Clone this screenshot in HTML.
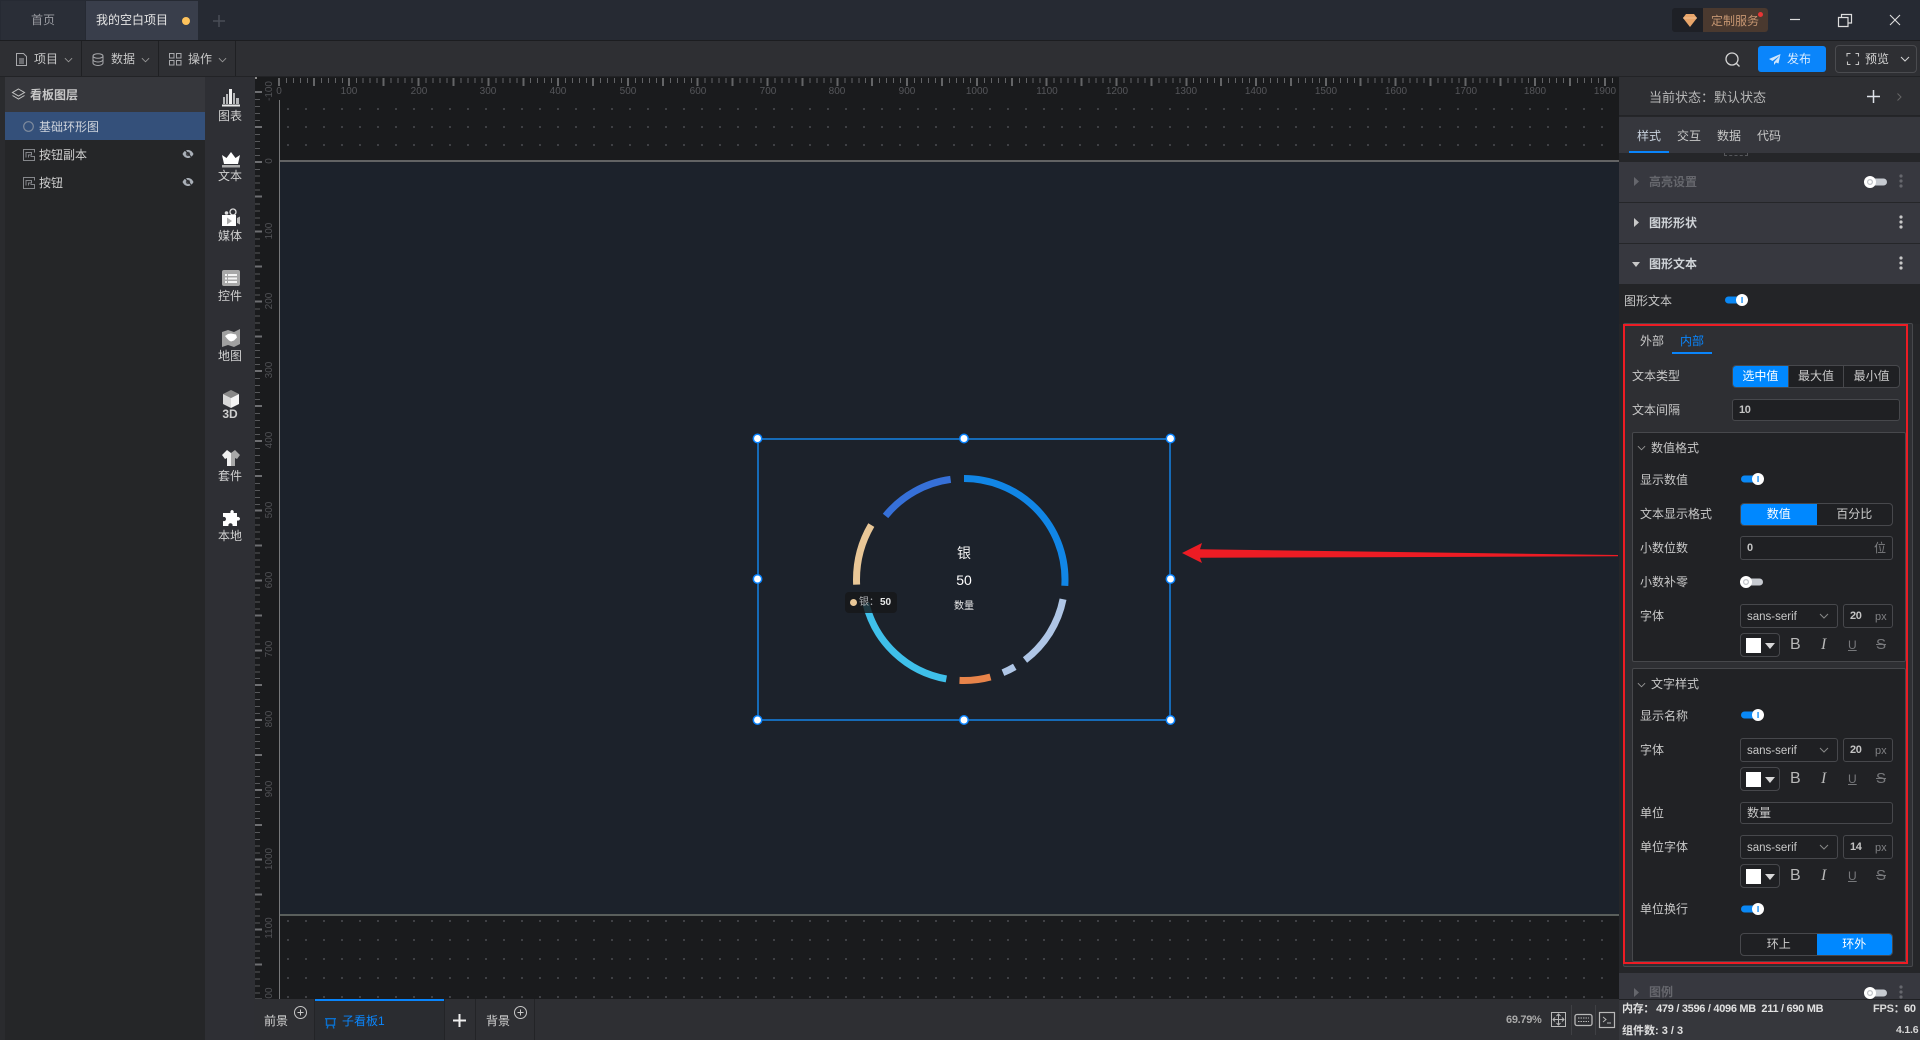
<!DOCTYPE html>
<html lang="zh"><head><meta charset="utf-8"><title>看板</title>
<style>
*{box-sizing:border-box}
html,body{margin:0;padding:0;width:1920px;height:1040px;overflow:hidden;background:#252629}
body{position:relative;font:12px/16px "Liberation Sans","Noto Sans CJK SC",sans-serif;color:#c8c8c8}
.b{position:absolute}
.t{position:absolute;white-space:nowrap;line-height:16px;margin-top:-8px}
.c{transform:translateX(-50%);text-align:center}
.s{font-weight:700}
.n{font-weight:700;font-size:11px;letter-spacing:-.4px;color:#c4c4c4}
.i{font:italic 16px/16px "Liberation Serif",serif;color:#b8b8b8}
.box{position:absolute;border:1px solid #47484c;border-radius:3px;background:#1f2023}
.seg{position:absolute;display:flex;border:1px solid #47484c;border-radius:4px;overflow:hidden;background:#1f2023}
.seg div{flex:1;text-align:center;line-height:21px;color:#ccc;border-left:1px solid #47484c}
.seg div:first-child{border-left:0}
.seg div.on{background:#0088ff;color:#fff;border-left:0}
.rl{position:absolute;font-size:10px;line-height:12px;color:#55565a;width:40px;text-align:center;white-space:nowrap;margin-left:-20px}
.rv{position:absolute;font-size:10px;line-height:12px;color:#505155;width:40px;text-align:center;left:250px;margin-top:-6px;transform:rotate(-90deg);white-space:nowrap}
svg{position:absolute;overflow:visible}
</style></head><body>
<svg width="0" height="0" style="position:absolute">
<defs>
<symbol id="tgon" viewBox="0 0 23 12"><rect x="0" y="2.500" width="20" height="7" rx="3.500" fill="#0a88f5"/><circle cx="17" cy="6" r="6" fill="#fff"/><rect x="16.400" y="3" width="1.300" height="6" fill="#0a88f5"/></symbol>
<symbol id="tgoff" viewBox="0 0 23 12"><rect x="3" y="2.500" width="20" height="7" rx="3.500" fill="#c6cad0"/><circle cx="6" cy="6" r="6" fill="#fff"/><circle cx="6" cy="6" r="2.400" fill="none" stroke="#bfc3c8" stroke-width="1.200"/></symbol>
<symbol id="keb" viewBox="0 0 4 14"><circle cx="2" cy="2" r="1.600"/><circle cx="2" cy="7" r="1.600"/><circle cx="2" cy="12" r="1.600"/></symbol>
<symbol id="eye" viewBox="0 0 12 12"><path d="M.5 6C2 3 4 2 6 2s4 1 5.500 4C10 9 8 10 6 10S2 9 .5 6z" fill="#aab0b8"/><circle cx="6" cy="6" r="2.200" fill="#45464b"/><path d="M2 1l9 10" stroke="#26272a" stroke-width="1"/></symbol>
<symbol id="btn" viewBox="0 0 12 12"><path d="M11.500 3.500V.5H.5v11H11.500V7.500H7.500M3 8.500V3.500H8.500V6H5.500V8.500" fill="none" stroke="#85878b" stroke-width="1"/></symbol>
<symbol id="chev" viewBox="0 0 10 6"><path d="M1 1l4 4 4-4" fill="none" stroke="currentColor" stroke-width="1"/></symbol>
</defs></svg>

<!-- top tab bar -->
<div class="b" style="left:0;top:0;width:1920px;height:41px;background:#262a33;border-bottom:1px solid #1c1d20"></div>
<div class="b" style="left:1px;top:1px;width:84px;height:39px;background:#2a2e37"></div>
<div class="b" style="left:86px;top:1px;width:112px;height:39px;background:#393e4b"></div>
<div class="t" style="left:31px;top:20px;color:#9a9ca2">首页</div>
<div class="t" style="left:96px;top:20px;color:#e6e6e6">我的空白项目</div>
<div class="b" style="left:182px;top:17px;width:8px;height:8px;border-radius:50%;background:#ffc35c"></div>
<svg style="left:213px;top:15px" width="12" height="12"><path d="M6 0v12M0 6h12" stroke="#484c56" stroke-width="1.500"/></svg>
<!-- service -->
<div class="b" style="left:1672px;top:8px;width:96px;height:24px;background:#1e2026;border-radius:3px"></div>
<div class="b" style="left:1703px;top:8px;width:65px;height:24px;background:#4a392f;border-radius:0 3px 3px 0"></div>
<svg style="left:1683px;top:14px" width="14" height="13"><path d="M3 0h8l3 4-7 9-7-9z" fill="#e8a56a"/><path d="M0 4h14" stroke="#f4c79b" stroke-width=".8"/></svg>
<div class="t" style="left:1711px;top:21px;color:#c69672">定制服务</div>
<div class="b" style="left:1758px;top:12px;width:5px;height:5px;border-radius:50%;background:#e83535"></div>
<svg style="left:1790px;top:10px" width="120" height="20"><path d="M0 9.500h10" stroke="#ddd" stroke-width="1.200"/><path d="M48.500 7.500h9.500v9h-9.500zM51.500 7V4.500h10v8.500h-3.500" fill="none" stroke="#ddd" stroke-width="1.200"/><path d="M100 5l10 10M110 5l-10 10" stroke="#ddd" stroke-width="1.100"/></svg>

<!-- toolbar -->
<div class="b" style="left:0;top:41px;width:1920px;height:36px;background:#2e2f33;border-bottom:1px solid #222326"></div>
<div class="b" style="left:81px;top:41px;width:1px;height:35px;background:#1f2023"></div>
<div class="b" style="left:158px;top:41px;width:1px;height:35px;background:#1f2023"></div>
<div class="b" style="left:235px;top:41px;width:1px;height:35px;background:#1f2023"></div>
<svg style="left:15px;top:53px" width="13" height="13" fill="none" stroke="#a8a9ac" stroke-width="1"><path d="M1.500.5h7l3 3v9h-10zM4 6h5M4 8h5M4 10h5"/></svg>
<div class="t" style="left:34px;top:59px">项目</div>
<svg style="left:64px;top:57px;color:#999" width="9" height="6"><use href="#chev"/></svg>
<svg style="left:92px;top:53px" width="12" height="13" fill="none" stroke="#a8a9ac" stroke-width="1"><ellipse cx="6" cy="3" rx="5" ry="2.300"/><path d="M1 3v7c0 1.500 2.500 2.500 5 2.500s5-1 5-2.500V3M1 6.500c0 1.500 2.500 2.500 5 2.500s5-1 5-2.500"/></svg>
<div class="t" style="left:111px;top:59px">数据</div>
<svg style="left:141px;top:57px;color:#999" width="9" height="6"><use href="#chev"/></svg>
<svg style="left:169px;top:53px" width="13" height="13" fill="none" stroke="#a8a9ac" stroke-width="1"><rect x=".5" y=".5" width="4.500" height="4.500"/><rect x="7.500" y=".5" width="4.500" height="4.500"/><rect x=".5" y="7.500" width="4.500" height="4.500"/><rect x="7.500" y="7.500" width="4.500" height="4.500"/></svg>
<div class="t" style="left:188px;top:59px">操作</div>
<svg style="left:218px;top:57px;color:#999" width="9" height="6"><use href="#chev"/></svg>
<svg style="left:1725px;top:52px" width="16" height="16" fill="none" stroke="#d4d4d4" stroke-width="1.300"><circle cx="7" cy="7" r="6"/><path d="M11.500 11.500l3 3"/></svg>
<div class="b" style="left:1758px;top:46px;width:68px;height:26px;background:#0a85fb;border-radius:3px"></div>
<svg style="left:1769px;top:54px" width="12" height="11"><path d="M11.500 0L0 5l3.500 2L11 1.500 5 8v3l2-2.500 2.500 1z" fill="#cfe5fb"/></svg>
<div class="t" style="left:1787px;top:59px;color:#d8ebff">发布</div>
<div class="b" style="left:1835px;top:45px;width:82px;height:28px;border:1px solid #4a4b4f;border-radius:4px"></div>
<svg style="left:1847px;top:53px" width="12" height="12" fill="none" stroke="#c4c4c4" stroke-width="1.100"><path d="M0 3.500V.5h3.500M8.500.5H11.500V3.500M11.500 8.500V11.500H8.500M3.500 11.500H.5V8.500"/></svg>
<div class="t" style="left:1865px;top:59px;color:#d4d4d4">预览</div>
<svg style="left:1900px;top:56px;color:#d4d4d4" width="10" height="6"><use href="#chev"/></svg>

<!-- left strip & layers -->
<div class="b" style="left:0;top:77px;width:5px;height:963px;background:#2a2b2e"></div>
<div class="b" style="left:5px;top:77px;width:200px;height:963px;background:#252628"></div>
<div class="b" style="left:5px;top:77px;width:200px;height:35px;background:#36373c"></div>
<svg style="left:12px;top:88px" width="13" height="13" fill="none" stroke="#c4c4c4" stroke-width="1"><path d="M6.500 1L12.500 4.500 6.500 8 .5 4.500zM.5 7.500l6 3.500 6-3.500"/></svg>
<div class="t s" style="left:30px;top:95px;color:#c8c8c8">看板图层</div>
<div class="b" style="left:5px;top:112px;width:200px;height:28px;background:#34507a"></div>
<svg style="left:23px;top:121px" width="11" height="11" fill="none" stroke="#7f8b9d" stroke-width="1.200"><circle cx="5.500" cy="5.500" r="4.800"/></svg>
<div class="t" style="left:39px;top:127px;color:#cfd4dc">基础环形图</div>
<svg style="left:23px;top:149px" width="12" height="12"><use href="#btn"/></svg>
<div class="t" style="left:39px;top:155px;color:#d0d0d0">按钮副本</div>
<svg style="left:182px;top:148px" width="12" height="12"><use href="#eye"/></svg>
<svg style="left:23px;top:177px" width="12" height="12"><use href="#btn"/></svg>
<div class="t" style="left:39px;top:183px;color:#d0d0d0">按钮</div>
<svg style="left:182px;top:176px" width="12" height="12"><use href="#eye"/></svg>

<!-- icon bar -->
<div class="b" style="left:205px;top:77px;width:50px;height:922px;background:#2e2f34"></div>
<div class="b" style="left:205px;top:999px;width:50px;height:41px;background:#2e2f34"></div>
<svg style="left:222px;top:89px" width="18" height="18"><path d="M1 15V8h2v7zM4 15V5h2v10zM7 15V0h3v15zM11 15V4h2v11zM14 15V9h3v6z" fill="#b5b6b8"/><path d="M7 15V0h3v15z" fill="#eee"/><rect x="0" y="15.500" width="18" height="2" fill="#e8e8e8"/></svg>
<div class="t c" style="left:230px;top:116px;color:#d0d0d0">图表</div>
<svg style="left:222px;top:152px" width="18" height="16"><path d="M0 3l4.500 3L9 0l4.500 6L18 3l-2 9H2z" fill="#fff"/><rect x="0" y="13" width="18" height="2.500" fill="#aaa"/></svg>
<div class="t c" style="left:230px;top:176px;color:#d0d0d0">文本</div>
<svg style="left:222px;top:209px" width="18" height="18"><circle cx="11" cy="3" r="3" fill="none" stroke="#ddd" stroke-width="1.300"/><circle cx="4.500" cy="4" r="1.800" fill="#ddd"/><path d="M0 6h14v11H0z" fill="#fff"/><path d="M15 9l3-1.500v8L15 14z" fill="#bbb"/><path d="M5 8.500l5 3.500-5 3.500z" fill="#aaa"/></svg>
<div class="t c" style="left:230px;top:236px;color:#d0d0d0">媒体</div>
<svg style="left:222px;top:270px" width="18" height="16"><rect width="18" height="16" rx="2" fill="#a8a8a8"/><path d="M3 4h2v2H3zM6 4h9v2H6zM3 7.500h2v2H3zM6 7.500h9v2H6zM3 11h2v2H3zM6 11h9v2H6z" fill="#f4f4f4"/></svg>
<div class="t c" style="left:230px;top:296px;color:#d0d0d0">控件</div>
<svg style="left:222px;top:329px" width="18" height="18"><path d="M0 3l6-2 6 2 6-3v15l-6 3-6-2-6 2z" fill="#a0a0a0"/><path d="M3 7l3-2 3-.5 5 1 1 3-3 3-3 1-2-1-2-2z" fill="#fff"/></svg>
<div class="t c" style="left:230px;top:356px;color:#d0d0d0">地图</div>
<svg style="left:223px;top:390px" width="16" height="18"><path d="M8 0l8 4-8 4-8-4z" fill="#888"/><path d="M0 4l8 4v10l-8-4z" fill="#d8d8d8"/><path d="M16 4l-8 4v10l8-4z" fill="#f4f4f4"/></svg>
<div class="t c s" style="left:230px;top:414px;color:#cfcfcf">3D</div>
<svg style="left:222px;top:450px" width="18" height="16"><path d="M5 0L0 5l3 4 2-1v8h4V3z" fill="#f0f0f0"/><path d="M13 0l5 5-3 4-2-1v8H9V3z" fill="#a8a8a8"/></svg>
<div class="t c" style="left:230px;top:476px;color:#d0d0d0">套件</div>
<svg style="left:222px;top:510px" width="18" height="17"><path d="M6 3h2.500C8 1.500 9 0 10 0s2.500 1.500 1.500 3H15v4c1.500-.5 3 .5 3 1.800S16.500 11 15 10.500V16H10.500c.5-1.500-.5-2.800-2-2.800s-2.500 1.300-2 2.800H1v-5c1.500.5 3-.3 3-2S2.500 6.500 1 7V3z" fill="#fff"/></svg>
<div class="t c" style="left:230px;top:536px;color:#d0d0d0">本地</div>

<!-- canvas -->
<div class="b" style="left:255px;top:77px;width:1364px;height:922px;background:#1a1b1d"></div>
<div class="b" style="left:280px;top:100px;width:1339px;height:60px;background-image:radial-gradient(circle at 1px 1px,#45464a 0.9px,transparent 1.2px);background-size:18px 18px;background-position:7px 8px;background-repeat:repeat"></div>
<div class="b" style="left:280px;top:916px;width:1339px;height:83px;background-image:radial-gradient(circle at 1px 1px,#45464a 0.9px,transparent 1.2px);background-size:18px 19px;background-position:7px 4px"></div>
<div class="b" style="left:280px;top:162px;width:1339px;height:752px;background:#1c222b"></div>
<div class="b" style="left:280px;top:160px;width:1339px;height:2px;background:#626364"></div>
<div class="b" style="left:280px;top:914px;width:1339px;height:2px;background:#5a5f5c"></div>
<div class="b" style="left:279px;top:100px;width:1px;height:899px;background:#77787a"></div>

<!-- rulers -->
<div class="b" style="left:279px;top:78px;width:1340px;height:5px;background:repeating-linear-gradient(90deg,#626366 0 1px,transparent 1px 6.979px)"></div>
<div class="b" style="left:278px;top:78px;width:1341px;height:8px;background:repeating-linear-gradient(90deg,#646567 0 2px,transparent 2px 34.895px)"></div>
<div class="b" style="left:255px;top:77px;width:2px;height:2px;background:#8a8a8a"></div>
<div class="b" style="left:255px;top:92px;width:5px;height:907px;background:repeating-linear-gradient(180deg,#58595c 0 1px,transparent 1px 6.979px)"></div>
<div class="b" style="left:255px;top:91px;width:7px;height:908px;background:repeating-linear-gradient(180deg,#6e6f72 0 2px,transparent 2px 34.895px);background-position:0 0"></div>

<div class="rl" style="left:279px;top:86px">0</div><div class="rl" style="left:349px;top:86px">100</div><div class="rl" style="left:419px;top:86px">200</div><div class="rl" style="left:488px;top:86px">300</div><div class="rl" style="left:558px;top:86px">400</div><div class="rl" style="left:628px;top:86px">500</div><div class="rl" style="left:698px;top:86px">600</div><div class="rl" style="left:768px;top:86px">700</div><div class="rl" style="left:837px;top:86px">800</div><div class="rl" style="left:907px;top:86px">900</div><div class="rl" style="left:977px;top:86px">1000</div><div class="rl" style="left:1047px;top:86px">1100</div><div class="rl" style="left:1117px;top:86px">1200</div><div class="rl" style="left:1186px;top:86px">1300</div><div class="rl" style="left:1256px;top:86px">1400</div><div class="rl" style="left:1326px;top:86px">1500</div><div class="rl" style="left:1396px;top:86px">1600</div><div class="rl" style="left:1466px;top:86px">1700</div><div class="rl" style="left:1535px;top:86px">1800</div><div class="rl" style="left:1605px;top:86px">1900</div>
<div class="rv" style="top:91px">-100</div><div class="rv" style="top:161px">0</div><div class="rv" style="top:231px">100</div><div class="rv" style="top:301px">200</div><div class="rv" style="top:370px">300</div><div class="rv" style="top:440px">400</div><div class="rv" style="top:510px">500</div><div class="rv" style="top:580px">600</div><div class="rv" style="top:649px">700</div><div class="rv" style="top:719px">800</div><div class="rv" style="top:789px">900</div><div class="rv" style="top:859px">1000</div><div class="rv" style="top:928px">1100</div>
<div class="rv" style="top:993px;width:14px;left:263px;overflow:hidden">00</div>

<!-- selection + chart -->
<svg style="left:0;top:0" width="1920" height="1040">
<g fill="none" stroke-width="7" transform="rotate(-90 964 579.500)">
<circle cx="964" cy="579.500" r="101" pathLength="360" stroke="#1186e6" stroke-dasharray="93.700 360" stroke-dashoffset="0"/>
<circle cx="964" cy="579.500" r="101" pathLength="360" stroke="#afc6e6" stroke-dasharray="41.600 360" stroke-dashoffset="-101.400"/>
<circle cx="964" cy="579.500" r="101" pathLength="360" stroke="#afc6e6" stroke-dasharray="7.500 360" stroke-dashoffset="-150"/>
<circle cx="964" cy="579.500" r="101" pathLength="360" stroke="#e8844a" stroke-dasharray="17.800 360" stroke-dashoffset="-165"/>
<circle cx="964" cy="579.500" r="101" pathLength="360" stroke="#3fc0ea" stroke-dasharray="66.400 360" stroke-dashoffset="-190.300"/>
<circle cx="964" cy="579.500" r="107.500" pathLength="360" stroke="#e9c797" stroke-dasharray="33.200 360" stroke-dashoffset="-267.400"/>
<circle cx="964" cy="579.500" r="101" pathLength="360" stroke="#3670d8" stroke-dasharray="43.400 360" stroke-dashoffset="-309.400"/>
</g>
<rect x="758" y="439" width="412" height="281" fill="none" stroke="#1483e6" stroke-width="1.500"/>
<g fill="#fff" stroke="#0a84ff" stroke-width="1.500">
<circle cx="757.500" cy="438.500" r="4.200"/><circle cx="964" cy="438.500" r="4.200"/><circle cx="1170.500" cy="438.500" r="4.200"/>
<circle cx="757.500" cy="579" r="4.200"/><circle cx="1170.500" cy="579" r="4.200"/>
<circle cx="757.500" cy="720" r="4.200"/><circle cx="964" cy="720" r="4.200"/><circle cx="1170.500" cy="720" r="4.200"/>
</g>
<path d="M1182 553L1202 543 1200 549.300 1618 555 1618 556.300 1200 557.800 1202 563z" fill="#ed1c24"/>
</svg>
<div class="t c" style="left:964px;top:553px;font-size:14px;color:#f2f2f2">银</div>
<div class="t c" style="left:964px;top:580px;font-size:14px;color:#fff">50</div>
<div class="t c" style="left:964px;top:607px;font-size:10px;color:#e8e8e8">数量</div>
<div class="b" style="left:845px;top:592px;width:52px;height:21px;background:rgba(22,23,26,.82);border-radius:4px"></div>
<div class="b" style="left:850px;top:599px;width:7px;height:7px;border-radius:50%;background:#e9c797"></div>
<div class="t" style="left:859px;top:603px;font-size:10px;color:#aeb0b3">银：</div>
<div class="t s" style="left:880px;top:603px;font-size:10px;color:#e8e8e8">50</div>

<!-- bottom bar -->
<div class="b" style="left:254px;top:999px;width:1365px;height:41px;background:#2e2f33"></div>
<div class="b" style="left:314px;top:999px;width:1px;height:41px;background:#232427"></div>
<div class="b" style="left:315px;top:999px;width:129px;height:41px;background:#2a2c30"></div>
<div class="b" style="left:315px;top:999px;width:129px;height:2px;background:#0a85fb"></div>
<div class="b" style="left:444px;top:999px;width:1px;height:41px;background:#232427"></div>
<div class="b" style="left:475px;top:999px;width:1px;height:41px;background:#232427"></div>
<div class="b" style="left:534px;top:999px;width:1px;height:41px;background:#232427"></div>
<div class="t" style="left:264px;top:1021px;color:#d4d4d4">前景</div>
<svg style="left:294px;top:1006px" width="13" height="13" fill="none" stroke="#c8c8c8"><circle cx="6.500" cy="6.500" r="6"/><path d="M3.500 6.500h6M6.500 3.500v6"/></svg>
<svg style="left:325px;top:1018px" width="11" height="11" fill="none" stroke="#0b6fcc" stroke-width="1.400"><path d="M0 .7h11M1.500 .7v6.500h8V.7M3 7.500l-1 3M8 7.500l1 3"/></svg>
<div class="t" style="left:342px;top:1021px;color:#0a85fb">子看板1</div>
<svg style="left:453px;top:1014px" width="13" height="13"><path d="M6.500 0v13M0 6.500h13" stroke="#eee" stroke-width="2"/></svg>
<div class="t" style="left:486px;top:1021px;color:#d4d4d4">背景</div>
<svg style="left:514px;top:1006px" width="13" height="13" fill="none" stroke="#c8c8c8"><circle cx="6.500" cy="6.500" r="6"/><path d="M3.500 6.500h6M6.500 3.500v6"/></svg>
<div class="t s" style="left:1506px;top:1020px;font-size:11px;letter-spacing:-.3px;color:#a8a8a8">69.79%</div>
<svg style="left:1551px;top:1012px" width="65" height="17" fill="none" stroke="#b8b8b8"><rect x=".5" y=".5" width="14" height="14"/><path d="M7.500 2v11M2 7.500h11M5.500 4l2-2 2 2M5.500 11l2 2 2-2M4 5.500l-2 2 2 2M11 5.500l2 2-2 2" stroke-width="1"/><rect x="24" y="2.500" width="17" height="11" rx="2" stroke-width="1.300"/><path d="M27 6h11M27 9.500h11" stroke-dasharray="1.500 1"/><rect x="48.500" y=".5" width="15" height="15" stroke-width="1.200"/><path d="M52 5l3 2.500-3 2.500M56 11h4"/></svg>
<div class="b" style="left:1571px;top:1005px;width:1px;height:30px;background:#3f4044"></div>
<div class="b" style="left:1595px;top:1005px;width:1px;height:30px;background:#3f4044"></div>

<!-- right panel -->
<div class="b" style="left:1619px;top:77px;width:301px;height:922px;background:#252629"></div>
<div class="b" style="left:1619px;top:77px;width:301px;height:39px;background:#2e2f33;border-bottom:1px solid #232427"></div>
<div class="t" style="left:1649px;top:98px;font-size:13px;color:#b8b8b8">当前状态：默认状态</div>
<svg style="left:1867px;top:90px" width="13" height="13"><path d="M6.500 0v13M0 6.500h13" stroke="#dfe3ea" stroke-width="1.500"/></svg>
<svg style="left:1897px;top:93px" width="5" height="8" fill="none" stroke="#666"><path d="M.5 .5L4 4 .5 7.500"/></svg>
<div class="b" style="left:1619px;top:117px;width:301px;height:36px;background:#36373d"></div>
<div class="t" style="left:1637px;top:136px;color:#c6d0dc">样式</div>
<div class="t" style="left:1677px;top:136px">交互</div>
<div class="t" style="left:1717px;top:136px">数据</div>
<div class="t" style="left:1757px;top:136px">代码</div>
<div class="b" style="left:1629px;top:151px;width:40px;height:2px;background:#0a85fb"></div>
<div class="b" style="left:1724px;top:153px;width:24px;height:3px;border:1px dashed #55565a;border-top:0"></div>

<div class="b" style="left:1619px;top:162px;width:301px;height:40px;background:#37383f"></div>
<svg style="left:1634px;top:177px" width="5" height="9"><path d="M0 0l5 4.500-5 4.500z" fill="#65666c"/></svg>
<div class="t s" style="left:1649px;top:182px;color:#66676d">高亮设置</div>
<svg style="left:1864px;top:176px" width="23" height="12"><use href="#tgoff"/></svg>
<svg style="left:1899px;top:174px;fill:#66676d" width="4" height="14"><use href="#keb"/></svg>

<div class="b" style="left:1619px;top:203px;width:301px;height:40px;background:#37383f"></div>
<svg style="left:1634px;top:218px" width="5" height="9"><path d="M0 0l5 4.500-5 4.500z" fill="#c8c8c8"/></svg>
<div class="t s" style="left:1649px;top:223px;color:#d0d4d8">图形形状</div>
<svg style="left:1899px;top:215px;fill:#c8c8c8" width="4" height="14"><use href="#keb"/></svg>

<div class="b" style="left:1619px;top:244px;width:301px;height:40px;background:#37383f"></div>
<svg style="left:1632px;top:262px" width="8" height="5"><path d="M0 0h8L4 5z" fill="#c8c8c8"/></svg>
<div class="t s" style="left:1649px;top:264px;color:#d0d4d8">图形文本</div>
<svg style="left:1899px;top:256px;fill:#c8c8c8" width="4" height="14"><use href="#keb"/></svg>

<div class="b" style="left:1619px;top:284px;width:301px;height:40px;background:#232427"></div>
<div class="t" style="left:1624px;top:301px">图形文本</div>
<svg style="left:1725px;top:294px" width="23" height="12"><use href="#tgon"/></svg>

<!-- inner panel -->
<div class="b" style="left:1623px;top:323px;width:290px;height:644px;background:#2e2f33;border:1px solid #47484c;border-radius:2px"></div>
<div class="t" style="left:1640px;top:341px">外部</div>
<div class="t" style="left:1680px;top:341px;color:#0a85fb">内部</div>
<div class="b" style="left:1672px;top:352px;width:40px;height:2px;background:#0a85fb"></div>

<div class="t" style="left:1632px;top:376px">文本类型</div>
<div class="seg" style="left:1732px;top:365px;width:168px;height:23px"><div class="on">选中值</div><div>最大值</div><div>最小值</div></div>
<div class="t" style="left:1632px;top:410px">文本间隔</div>
<div class="box" style="left:1732px;top:399px;width:168px;height:22px"></div>
<div class="t n" style="left:1739px;top:410px">10</div>

<!-- group 1 -->
<div class="b" style="left:1632px;top:432px;width:274px;height:230px;background:#212225;border:1px solid #47484c;border-radius:2px"></div>
<svg style="left:1637px;top:445px;color:#9a9a9a" width="9" height="6"><use href="#chev"/></svg>
<div class="t" style="left:1651px;top:448px">数值格式</div>
<div class="t" style="left:1640px;top:480px">显示数值</div>
<svg style="left:1741px;top:473px" width="23" height="12"><use href="#tgon"/></svg>
<div class="t" style="left:1640px;top:514px">文本显示格式</div>
<div class="seg" style="left:1740px;top:503px;width:153px;height:23px"><div class="on">数值</div><div style="border-left:0">百分比</div></div>
<div class="t" style="left:1640px;top:548px">小数位数</div>
<div class="box" style="left:1740px;top:536px;width:153px;height:24px"></div>
<div class="t n" style="left:1747px;top:548px">0</div>
<div class="t" style="left:1874px;top:548px;color:#7c7d80">位</div>
<div class="t" style="left:1640px;top:582px">小数补零</div>
<svg style="left:1740px;top:576px" width="23" height="12"><use href="#tgoff"/></svg>
<div class="t" style="left:1640px;top:616px">字体</div>
<div class="box" style="left:1740px;top:604px;width:98px;height:24px"></div>
<div class="t" style="left:1747px;top:617px;font-size:11.500px">sans-serif</div>
<svg style="left:1819px;top:613px;color:#888" width="10" height="6"><use href="#chev"/></svg>
<div class="box" style="left:1843px;top:604px;width:50px;height:24px"></div>
<div class="t n" style="left:1850px;top:616px">20</div>
<div class="t" style="left:1875px;top:617px;font-size:11px;color:#808184">px</div>
<div class="box" style="left:1740px;top:633px;width:40px;height:24px;border-radius:4px"></div>
<div class="b" style="left:1746px;top:638px;width:15px;height:15px;background:#fff"></div>
<svg style="left:1765px;top:643px" width="10" height="6"><path d="M0 0h10L5 6z" fill="#d8d8d8"/></svg>
<div class="t" style="left:1790px;top:645px;font-size:16px;color:#b8b8b8">B</div>
<div class="t i" style="left:1821px;top:645px">I</div>
<div class="t" style="left:1848px;top:645px;font-size:12px;color:#77787b;text-decoration:underline">U</div>
<div class="t" style="left:1876px;top:645px;font-size:15px;color:#77787b;text-decoration:line-through">S</div>

<!-- group 2 -->
<div class="b" style="left:1632px;top:668px;width:274px;height:294px;background:#212225;border:1px solid #47484c;border-radius:2px"></div>
<svg style="left:1637px;top:682px;color:#9a9a9a" width="9" height="6"><use href="#chev"/></svg>
<div class="t" style="left:1651px;top:684px">文字样式</div>
<div class="t" style="left:1640px;top:716px">显示名称</div>
<svg style="left:1741px;top:709px" width="23" height="12"><use href="#tgon"/></svg>
<div class="t" style="left:1640px;top:750px">字体</div>
<div class="box" style="left:1740px;top:738px;width:98px;height:24px"></div>
<div class="t" style="left:1747px;top:751px;font-size:11.500px">sans-serif</div>
<svg style="left:1819px;top:747px;color:#888" width="10" height="6"><use href="#chev"/></svg>
<div class="box" style="left:1843px;top:738px;width:50px;height:24px"></div>
<div class="t n" style="left:1850px;top:750px">20</div>
<div class="t" style="left:1875px;top:751px;font-size:11px;color:#808184">px</div>
<div class="box" style="left:1740px;top:767px;width:40px;height:24px;border-radius:4px"></div>
<div class="b" style="left:1746px;top:772px;width:15px;height:15px;background:#fff"></div>
<svg style="left:1765px;top:777px" width="10" height="6"><path d="M0 0h10L5 6z" fill="#d8d8d8"/></svg>
<div class="t" style="left:1790px;top:779px;font-size:16px;color:#b8b8b8">B</div>
<div class="t i" style="left:1821px;top:779px">I</div>
<div class="t" style="left:1848px;top:779px;font-size:12px;color:#77787b;text-decoration:underline">U</div>
<div class="t" style="left:1876px;top:779px;font-size:15px;color:#77787b;text-decoration:line-through">S</div>
<div class="t" style="left:1640px;top:813px">单位</div>
<div class="box" style="left:1740px;top:802px;width:153px;height:22px"></div>
<div class="t" style="left:1747px;top:813px">数量</div>
<div class="t" style="left:1640px;top:847px">单位字体</div>
<div class="box" style="left:1740px;top:835px;width:98px;height:24px"></div>
<div class="t" style="left:1747px;top:848px;font-size:11.500px">sans-serif</div>
<svg style="left:1819px;top:844px;color:#888" width="10" height="6"><use href="#chev"/></svg>
<div class="box" style="left:1843px;top:835px;width:50px;height:24px"></div>
<div class="t n" style="left:1850px;top:847px">14</div>
<div class="t" style="left:1875px;top:848px;font-size:11px;color:#808184">px</div>
<div class="box" style="left:1740px;top:864px;width:40px;height:24px;border-radius:4px"></div>
<div class="b" style="left:1746px;top:869px;width:15px;height:15px;background:#fff"></div>
<svg style="left:1765px;top:874px" width="10" height="6"><path d="M0 0h10L5 6z" fill="#d8d8d8"/></svg>
<div class="t" style="left:1790px;top:876px;font-size:16px;color:#b8b8b8">B</div>
<div class="t i" style="left:1821px;top:876px">I</div>
<div class="t" style="left:1848px;top:876px;font-size:12px;color:#77787b;text-decoration:underline">U</div>
<div class="t" style="left:1876px;top:876px;font-size:15px;color:#77787b;text-decoration:line-through">S</div>
<div class="t" style="left:1640px;top:909px">单位换行</div>
<svg style="left:1741px;top:903px" width="23" height="12"><use href="#tgon"/></svg>
<div class="seg" style="left:1740px;top:933px;width:153px;height:23px"><div>环上</div><div class="on">环外</div></div>

<!-- red box -->
<div class="b" style="left:1623px;top:324px;width:285px;height:640px;border:2px solid #ed1c24"></div>

<!-- legend -->
<div class="b" style="left:1619px;top:973px;width:301px;height:26px;background:#37383f"></div>
<svg style="left:1634px;top:988px" width="5" height="9"><path d="M0 0l5 4.500-5 4.500z" fill="#65666c"/></svg>
<div class="t s" style="left:1649px;top:992px;color:#66676d">图例</div>
<svg style="left:1864px;top:987px" width="23" height="12"><use href="#tgoff"/></svg>
<svg style="left:1899px;top:985px;fill:#66676d" width="4" height="14"><use href="#keb"/></svg>

<!-- stats -->
<div class="b" style="left:1619px;top:999px;width:301px;height:41px;background:#36373c;border-top:1px solid #1f2023"></div>
<div class="t s" style="left:1622px;top:1009px;font-size:11px;letter-spacing:-.3px;color:#e0e0e0">内存：<span style="margin-left:2px">479 / 3596 / 4096 MB&nbsp; 211 / 690 MB</span></div>
<div class="t s" style="left:1873px;top:1009px;font-size:11px;letter-spacing:-.2px;color:#d8d8d8">FPS：</div>
<div class="t s" style="left:1904px;top:1009px;font-size:11px;letter-spacing:-.3px;color:#e0e0e0">60</div>
<div class="t s" style="left:1622px;top:1031px;font-size:11px;color:#e0e0e0">组件数: 3 / 3</div>
<div class="t s" style="left:1896px;top:1030px;font-size:10.500px;letter-spacing:-.2px;color:#d8d8d8">4.1.6</div>
</body></html>
